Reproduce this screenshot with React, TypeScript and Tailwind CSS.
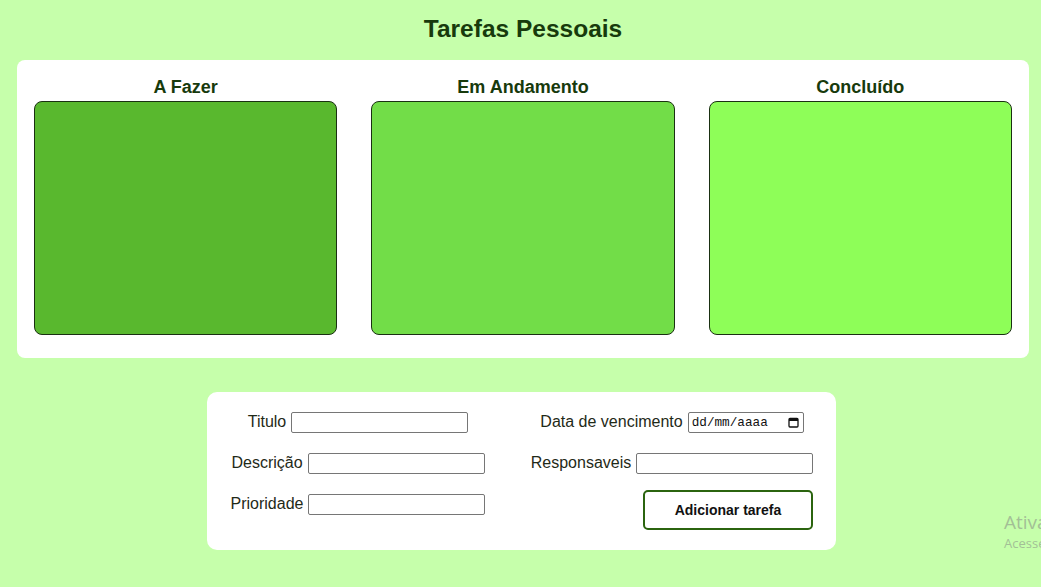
import React from 'react';

const columns = [
  { title: 'A Fazer', color: 'bg-[#59b82e]' },
  { title: 'Em Andamento', color: 'bg-[#72dd48]' },
  { title: 'Concluído', color: 'bg-[#8efe58]' },
];

function Field({ label, width = 'w-[177px]' }: { label: string; width?: string }) {
  return (
    <label className="flex items-center gap-[5px] h-[21px]">
      <span className="text-[16px] leading-[18px] -mt-[1px] text-[#1f2a18]">{label}</span>
      <input type="text" className={`${width} h-[21px] border border-[#767676] rounded-[2px] bg-white px-1 text-[13px] outline-none`} />
    </label>
  );
}

function DateField() {
  return (
    <label className="flex items-center gap-[5px] h-[21px]">
      <span className="text-[16px] leading-[18px] -mt-[1px] text-[#1f2a18]">Data de vencimento</span>
      <div className="w-[116px] h-[21px] border border-[#767676] rounded-[2px] bg-white flex items-center pl-[3px] pr-[4px]">
        <span className="text-[12.7px] text-[#111]" style={{ fontFamily: '"Liberation Mono", monospace' }}>
          dd/mm/aaaa
        </span>
        <svg className="ml-auto" width="11" height="11" viewBox="0 0 11 11">
          <rect x="1" y="1.5" width="9" height="8.5" rx="1" fill="none" stroke="#111" strokeWidth="1.3" />
          <rect x="1" y="1.5" width="9" height="2.5" fill="#111" />
        </svg>
      </div>
    </label>
  );
}

export default function App() {
  return (
    <div
      className="relative min-h-[587px] bg-[#c6ffab] overflow-hidden pt-[15px]"
      style={{ fontFamily: '"Liberation Sans", Arial, sans-serif' }}
    >
      <h1 className="text-center text-[24.5px] leading-[28px] font-bold text-[#173a0c] pl-[5px]">Tarefas Pessoais</h1>

      {/* Board */}
      <div className="ml-[17px] mr-[12px] mt-[17px] bg-white rounded-[8px] px-[17px] pt-[17px] pb-[23px] grid grid-cols-3 gap-x-[34px]">
        {columns.map((col) => (
          <div key={col.title} className="flex flex-col">
            <h3 className="text-center text-[18px] leading-[21px] font-bold text-[#173a0c] mb-[3px]">{col.title}</h3>
            <div className={`${col.color} h-[234px] rounded-[8px] border-[1.5px] border-[#1a3012]`} />
          </div>
        ))}
      </div>

      {/* Form */}
      <div className="ml-[207px] mt-[34px] w-[629px] bg-white rounded-[10px] py-[20px] flex">
        <div className="w-[302px] flex flex-col items-center gap-y-[20px]">
          <Field label="Titulo" />
          <Field label="Descrição" />
          <Field label="Prioridade" />
        </div>
        <div className="ml-[12px] w-[302px] flex flex-col items-center">
          <DateField />
          <div className="mt-[20px]">
            <Field label="Responsaveis" />
          </div>
          <div className="mt-[16px] w-[282px] flex justify-end">
            <button className="w-[170px] h-[40px] bg-white border-2 border-[#2b640f] rounded-[5px] text-[14px] font-bold text-[#111]">
              Adicionar tarefa
            </button>
          </div>
        </div>
      </div>

      {/* Windows watermark */}
      <div
        className="absolute left-[1004px] top-[510px] whitespace-nowrap text-[#a3bf96] pointer-events-none"
        style={{ fontFamily: '"Open Sans", "Noto Sans", sans-serif' }}
      >
        <div className="text-[19px] leading-[24px]">Ativar o Windows</div>
        <div className="text-[13px] leading-[18px]">Acesse Configurações para ativar o Windows.</div>
      </div>
    </div>
  );
}
